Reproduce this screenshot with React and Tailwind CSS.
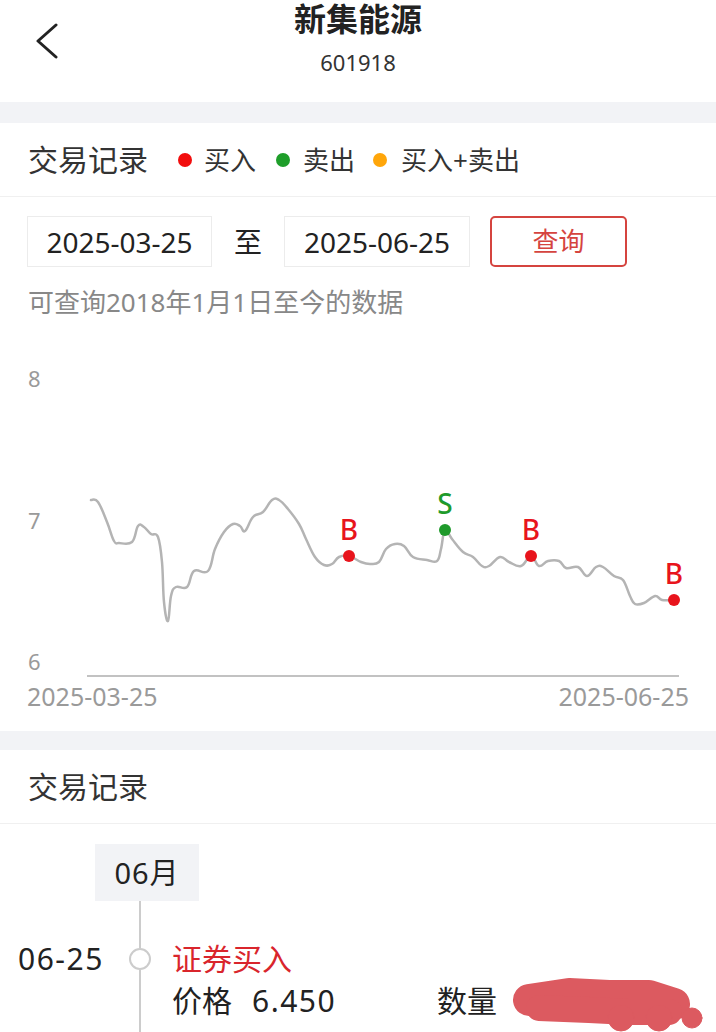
import React from "react";

const pts = [
  [91, 501], [98, 503], [107, 523], [114, 542], [119, 544], [132, 543], [138, 527], [144, 528],
  [151, 535], [158, 538], [162, 563], [164, 603], [168, 622], [171, 597], [176, 588], [187, 588],
  [194, 572], [208, 572], [215, 550], [224, 533], [233, 525], [240, 527], [245, 532], [253, 518],
  [263, 513], [272, 501], [279, 501], [288, 510], [299, 525], [306, 540], [315, 558], [324, 566],
  [332, 565], [339, 558], [349, 557], [361, 563], [370, 565], [379, 563], [386, 550], [395, 545],
  [404, 547], [413, 558], [427, 561], [437, 562], [441, 550], [445, 531], [452, 540], [463, 553],
  [473, 558], [482, 567], [489, 567], [500, 558], [509, 563], [521, 567], [531, 557], [539, 567],
  [548, 562], [559, 562], [566, 569], [578, 568], [587, 577], [596, 568], [603, 568], [614, 577],
  [623, 581], [630, 597], [635, 605], [644, 604], [655, 597], [662, 601], [674, 601],
];

const OY = 330;

function smoothPath(points) {
  const p = points.map(([x, y]) => [x, y - OY]);
  let d = `M${p[0][0]},${p[0][1]}`;
  for (let i = 0; i < p.length - 1; i++) {
    const p0 = p[i - 1] || p[i];
    const p1 = p[i];
    const p2 = p[i + 1];
    const p3 = p[i + 2] || p2;
    const t = 0.2;
    const c1x = p1[0] + (p2[0] - p0[0]) * t;
    const c1y = p1[1] + (p2[1] - p0[1]) * t;
    const c2x = p2[0] - (p3[0] - p1[0]) * t;
    const c2y = p2[1] - (p3[1] - p1[1]) * t;
    d += ` C${c1x.toFixed(1)},${c1y.toFixed(1)} ${c2x.toFixed(1)},${c2y.toFixed(1)} ${p2[0]},${p2[1]}`;
  }
  return d;
}

const marks = [
  { x: 349, y: 557, t: "B", c: "#e8141c" },
  { x: 445, y: 531, t: "S", c: "#1f9a2b" },
  { x: 531, y: 557, t: "B", c: "#e8141c" },
  { x: 674, y: 601, t: "B", c: "#e8141c" },
];

function Chart() {
  return (
    <svg width="716" height="402" className="block" style={{ fontFamily: '"Noto Sans", sans-serif' }}>
      <text x="28" y="58" fontSize="22" fill="#9a9a9a">8</text>
      <text x="28" y="200" fontSize="22" fill="#9a9a9a">7</text>
      <text x="28" y="341" fontSize="22" fill="#9a9a9a">6</text>
      <line x1="87" y1="347" x2="679" y2="347" stroke="#c2c2c2" strokeWidth="2" />
      <text x="27" y="377" fontSize="25" fill="#9a9a9a">2025-03-25</text>
      <text x="689" y="377" fontSize="25" fill="#9a9a9a" textAnchor="end">2025-06-25</text>
      <path d={smoothPath(pts)} fill="none" stroke="#b4b4b4" strokeWidth="2.5" strokeLinejoin="round" strokeLinecap="round" />
      {marks.map((m, i) => (
        <g key={i}>
          <circle cx={m.x} cy={m.y - OY} r="6" fill={m.c} />
          <text x={m.x} y={m.y - OY - 16} fontSize="28" fontWeight="500" fill={m.c} textAnchor="middle">{m.t}</text>
        </g>
      ))}
    </svg>
  );
}

function Blob() {
  return (
    <svg width="196" height="58" className="block">
      <g fill="#dc5a60" stroke="#dc5a60" strokeLinecap="round" strokeLinejoin="round">
        <path d="M20,26 L60,20 L100,22 L140,22 L165,30" strokeWidth="32" fill="none" />
        <path d="M30,34 L80,36 L120,38 L160,38" strokeWidth="26" fill="none" />
        <circle cx="183" cy="44" r="10" />
        <circle cx="112" cy="44" r="13" />
        <circle cx="150" cy="44" r="13" />
      </g>
    </svg>
  );
}

export default function App() {
  return (
    <div
      className="w-[716px] h-[1032px] overflow-hidden bg-white text-[#222]"
      style={{ fontFamily: '"Noto Sans", "Noto Sans CJK SC", sans-serif' }}
    >
      {/* Header */}
      <div className="grid grid-cols-[100px_1fr_100px] h-[102px]">
        <div className="pl-[34px] pt-[23px]">
          <svg width="26" height="36" viewBox="0 0 26 36">
            <path d="M22,2 L4,18 L22,34" fill="none" stroke="#222" strokeWidth="3" strokeLinecap="round" strokeLinejoin="round" />
          </svg>
        </div>
        <div className="flex flex-col items-center pt-[3px]">
          <div className="text-[32px] font-bold leading-[32px]">新集能源</div>
          <div className="mt-[13px] text-[22px] leading-[28px] text-[#333]">601918</div>
        </div>
        <div />
      </div>

      <div className="h-[21px] bg-[#f2f3f6]" />

      {/* Legend row */}
      <div className="h-[74px] flex items-center px-[28px] border-b border-[#f0f0f0]">
        <span className="text-[30px] leading-none text-[#333]">交易记录</span>
        <span className="ml-[30px] w-[14px] h-[14px] rounded-full bg-[#f20d0d]" />
        <span className="ml-[12px] text-[26px] leading-none text-[#333]">买入</span>
        <span className="ml-[20px] w-[14px] h-[14px] rounded-full bg-[#1e9e2a]" />
        <span className="ml-[13px] text-[26px] leading-none text-[#333]">卖出</span>
        <span className="ml-[18px] w-[14px] h-[14px] rounded-full bg-[#ffa60a]" />
        <span className="ml-[14px] text-[26px] leading-none text-[#333]">买入+卖出</span>
      </div>

      {/* Date row */}
      <div className="mt-[19px] flex items-center pl-[27px]">
        <div className="w-[185px] h-[51px] border border-[#ececec] flex items-center justify-center text-[28px] text-[#222]">
          2025-03-25
        </div>
        <div className="w-[72px] text-center text-[28px] text-[#222]">至</div>
        <div className="w-[186px] h-[51px] border border-[#ececec] flex items-center justify-center text-[28px] text-[#222]">
          2025-06-25
        </div>
        <div className="ml-[20px] w-[137px] h-[51px] border-2 border-[#d5443f] rounded-[5px] flex items-center justify-center text-[26px] text-[#d5443f]">
          查询
        </div>
      </div>

      <div className="mt-[18px] pl-[28px] text-[26px] leading-[34px] text-[#888]">可查询2018年1月1日至今的数据</div>

      <div className="mt-[10px]">
        <Chart />
      </div>

      <div className="h-[19px] bg-[#f2f3f6]" />

      <div className="h-[74px] flex items-center px-[28px] border-b border-[#f0f0f0]">
        <span className="text-[30px] leading-none text-[#333]">交易记录</span>
      </div>

      {/* Timeline */}
      <div className="mt-[20px] ml-[95px] w-[104px] h-[57px] bg-[#f2f3f6] flex items-center justify-center text-[29px] tracking-[1px] text-[#222]">
        06月
      </div>
      <div className="flex h-[140px]">
        <div className="w-[118px] pl-[18px] pt-[40px] text-[30px] tracking-[1.5px] leading-[36px] text-[#222]">06-25</div>
        <div className="w-[44px] flex flex-col items-center">
          <div className="w-[2px] h-[47px] bg-[#cccccc]" />
          <div className="w-[22px] h-[22px] rounded-full border-2 border-[#cccccc] bg-white" />
          <div className="w-[2px] flex-1 bg-[#cccccc]" />
        </div>
        <div className="pl-[10px] pt-[40px]">
          <div className="text-[30px] leading-[36px] text-[#d9252c]">证券买入</div>
          <div className="mt-[6px] flex items-start text-[30px] leading-[36px] text-[#222]">
            <div className="w-[265px] flex items-center">
              <span>价格</span>
              <span className="ml-[20px] tracking-[1.5px]">6.450</span>
            </div>
            <span>数量</span>
            <div className="ml-[12px] h-[36px]">
              <div className="-mt-[9px]">
                <Blob />
              </div>
            </div>
          </div>
        </div>
      </div>
    </div>
  );
}
